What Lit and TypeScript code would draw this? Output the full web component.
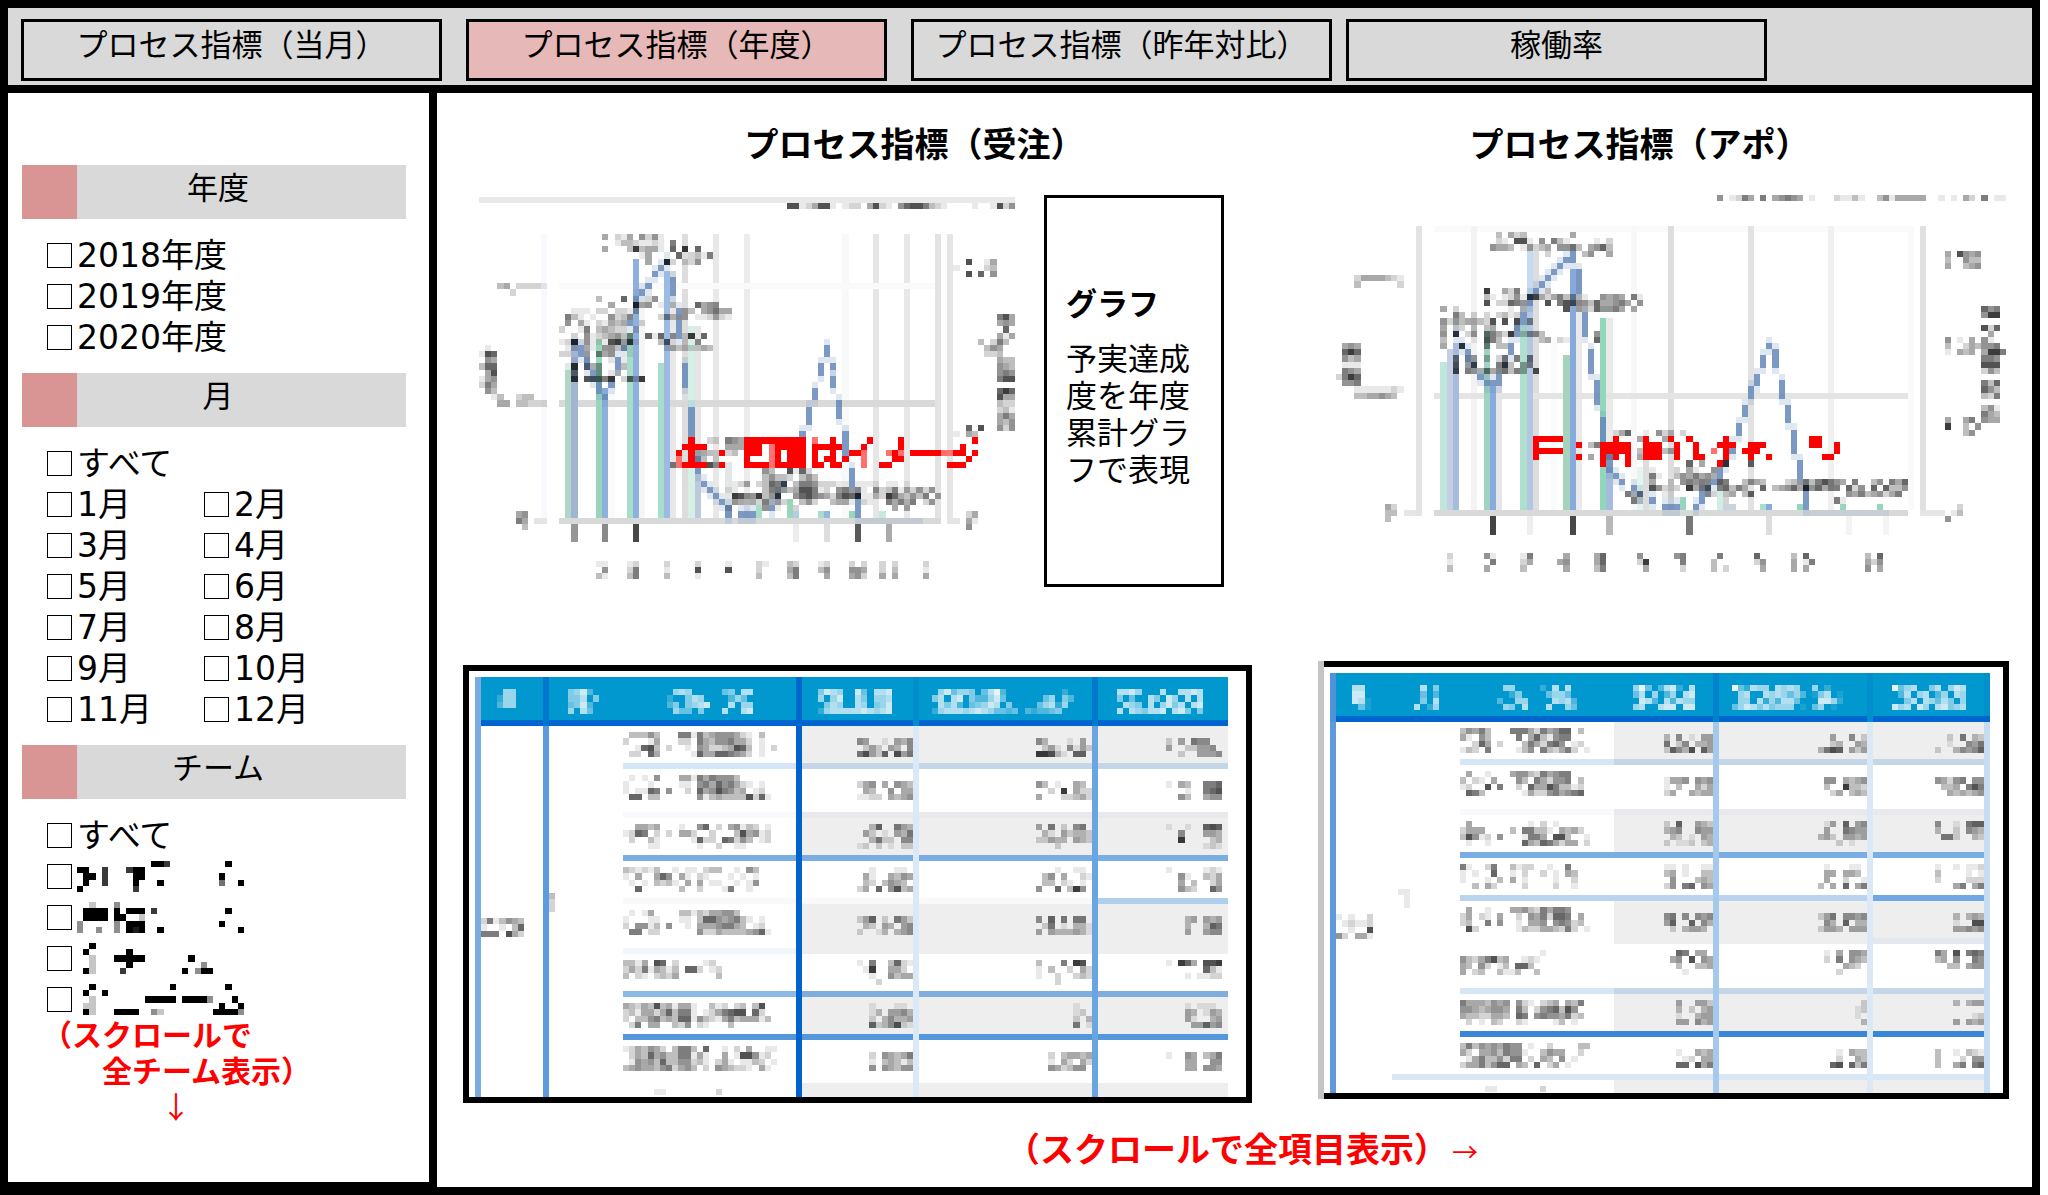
import { LitElement, html, svg, css, nothing } from "lit";
import { customElement, property } from "lit/decorators.js";

/* ---------- block glyphs: digits are ink density 1-9, R/P are red and pink ---------- */

const CELL = 37 / 6;

type Ink = (ch: string) => { fill: string; opacity: number } | null;

const greyInk: Ink = (ch) => {
  if (ch === "R") return { fill: "#ff0000", opacity: 1 };
  if (ch === "P") return { fill: "#ff7070", opacity: 1 };
  if (ch === "W") return { fill: "#ffffff", opacity: 1 };
  if (ch >= "1" && ch <= "9") return { fill: "#000000", opacity: Number(ch) * 0.085 };
  return null;
};
const blackInk: Ink = (ch) =>
  ch >= "1" && ch <= "9" ? { fill: "#000000", opacity: Number(ch) / 9 } : null;
const whiteInk: Ink = (ch) =>
  ch >= "1" && ch <= "9" ? { fill: "#ffffff", opacity: Number(ch) / 10 } : null;

const blocks = (col: number, row: number, text: string, ink: Ink) =>
  [...text].map((ch, i) => {
    const p = ink(ch);
    return p
      ? svg`<rect x=${col + i} y=${row} width="1" height="1" fill=${p.fill} fill-opacity=${p.opacity}></rect>`
      : nothing;
  });

const glyphs = (source: string, ink: Ink = greyInk) => {
  const rows = source.split("/");
  const cols = Math.max(...rows.map((r) => r.length));
  return html`<svg
    class="glyphs"
    width=${Math.round(cols * CELL)}
    height=${Math.round(rows.length * CELL)}
    viewBox="0 0 ${cols} ${rows.length}"
    preserveAspectRatio="none"
    shape-rendering="crispEdges"
    aria-hidden="true"
  >${rows.map((r, i) => blocks(0, i, r, ink))}</svg>`;
};

/* ---------- charts ---------- */

/** x, y, width, height, colour */
type Bar = [number, number, number, number, string];

interface ChartData {
  cols: number;
  rows: number;
  grid: Bar[];
  bars: Bar[];
  line: string;
  marks: string;
}

const GREEN = "#97d6bb";
const MINT = "#a8dec9";
const BLUE = "#8eb0dc";

const orders: ChartData = {
  cols: 87,
  rows: 62,
  grid: [
    [0, 0, 87, 1, "#e9e9e9"],
    [10, 6, 1, 47, "#f8f9fc"],
    [21, 23, 1, 29, "#fafafb"],
    [26, 14, 1, 38, "#f5f5f5"],
    [31, 12, 1, 40, "#e8e8e8"],
    [33, 6, 1, 46, "#dddddd"],
    [35, 21, 1, 31, "#e5e5e5"],
    [38, 6, 1, 46, "#e8e8e8"],
    [40, 43, 1, 9, "#e2e6e4"],
    [43, 6, 1, 46, "#ebecec"],
    [59, 6, 1, 46, "#f8fafa"],
    [64, 6, 1, 46, "#e6e6e6"],
    [69, 6, 1, 46, "#e8e8e8"],
    [74, 6, 1, 46, "#e3e3e3"],
    [76, 6, 1, 47, "#e5e5e5"],
    [13, 14, 61, 1, "#fafafa"],
    [13, 33, 61, 1, "#d9d9d9"],
    [9, 52, 2, 1, "#e5e5e5"],
    [76, 52, 2, 1, "#e5e5e5"],
    [15, 53, 1, 3, "#969696"],
    [20, 53, 1, 3, "#8a8a8a"],
    [25, 53, 1, 3, "#484848"],
    [51, 53, 1, 3, "#ececec"],
    [56, 53, 1, 3, "#dddddd"],
    [61, 53, 1, 3, "#5a5a5a"],
    [66, 53, 1, 3, "#aaaaaa"],
  ],
  bars: [
    [14, 28, 1, 24, "#b2d6c5"],
    [14, 27, 1, 1, "#dcece4"],
    [15, 24, 1, 28, "#a2b4d4"],
    [19, 23, 1, 29, GREEN],
    [20, 31, 1, 21, BLUE],
    [24, 22, 1, 30, MINT],
    [25, 10, 1, 42, BLUE],
    [29, 27, 1, 25, MINT],
    [30, 12, 1, 40, "#9cbbe4"],
    [34, 21, 1, 31, "#d6f0e6"],
    [35, 45, 1, 7, "#bccadc"],
    [45, 50, 1, 2, MINT],
    [50, 49, 1, 3, GREEN],
    [51, 51, 1, 1, "#b4cbe6"],
    [55, 51, 1, 1, MINT],
    [56, 51, 1, 1, "#93b6e4"],
    [60, 51, 1, 1, GREEN],
    [65, 51, 1, 1, "#c8eadc"],
    [13, 52, 62, 1, "#d8dada"],
    [62, 52, 10, 1, "#c5cad2"],
  ],
  line:
    "15,23,1 16,24,2 17,26,2 18,28,2 19,30,2 20,32,1 21,30,1 22,26,2 23,24,1 24,20,1 25,16,2 26,15,1 27,14,1 28,12,1 29,11,1 30,10,1 31,13,3 32,18,1 32,20,3 33,27,4 34,34,5 35,42,3 36,46,1 37,47,1 38,48,1 39,49,1 40,50,2 42,51,1 43,51,1 44,51,1 47,50,1 48,48,1 49,46,1 52,38,1 53,34,3 54,31,2 55,27,2 56,24,2 57,27,1 57,29,2 58,33,3 59,38,4 60,44,3 61,48,4",
  marks: `50,1:88124881.122.4821.57886321....1..1825888
20,6:4.214.5251
22,7:13321121.6
20,8:4...393441.7.9.7
26,9:14....7.2316
27,10:4..92.225
3,14:34.22221
5,15:2
19,16:3...7...25
21,17:4...945.1.3...7455
15,18:111.22.2213.......43.45644
14,19:631.1..5235....25344.112421
14,20:5.41.21434..2
13,21:2..16.34322.2
15,22:1.51234535..717.5.29.7
13,23:1291511189491...371.2.5
14,24:12.41.55321.....24332243
13,25:22..4.545..1
15,26:1.1...1.1
15,27:9.534...3
15,28:6...4.13
15,29:9.86769.2739
1,24:1
0,25:187
1,26:54
0,27:377
1,28:48
0,29:145
0,30:264
1,31:53
2,32:13..233
3,33:44.33222
6,51:45
6,52:64
7,53:3
79,10:8..14
77,11:1....23
79,12:8.7.5
79,37:7.8
77,38:1.43
79,51:24
79,52:41
79,53:5
84,19:684
84,20:454
85,21:7
84,22:414
81,23:3.263
82,24:354
82,25:223
84,26:433
84,27:543
84,28:565
84,29:688
84,31:797
84,32:844
84,33:322
84,34:231
84,35:464
84,36:435
84,37:525
37,39:22.654
40,40:4443
35,41:3432.23
35,42:23.2
31,43:6.....85
46,44:53..8172
46,45:35322.353
41,46:124.23767.366522211.1111.11.1
40,47:11....36643488612.56451.5236142525
41,48:98559358..5786542687911329742536.4
41,49:543426342..352..3441.21..64636.25
40,50:2.....5.1..2...............4.4
34,39:R
33,40:RRRR
32,41:R.R....R
32,42:P.R
32,43:PRRRR..R
43,39:RRRRRRRRRR
43,40:RRRWPRRRRR
43,41:RRRWPRWRRR
43,42:RWWWPRWRRR
43,43:RRRRPRRRRR
54,39:P..R.....R
54,40:RRRRR...R
54,41:R..R..RRP
54,42:R.RR.R..P
54,43:RR.RR...P
68,39:R
68,40:R
66,41:PRP.RRRRRPPRR
67,42:RR
65,43:RR
80,39:R
78,40:R
80,41:R
79,42:R
76,43:RRR
19,59:11...12....2....2....1....21...32...12...2.2..2.2....2
20,60:5...26....1....8....8....2....46...35...554..2.3....1
19,61:31...36....3....1.........3....36....4...452..4.4....4`,
};

const appointments: ChartData = {
  cols: 109,
  rows: 61,
  grid: [
    [16, 5, 77, 1, "#fafafa"],
    [13, 5, 1, 47, "#e3e3e3"],
    [22, 5, 1, 46, "#f3f3f3"],
    [26, 31, 1, 20, "#e6e6e6"],
    [32, 9, 1, 42, "#dddddd"],
    [35, 23, 1, 28, "#f8fafc"],
    [39, 12, 1, 39, "#eaeaea"],
    [44, 20, 1, 31, "#eaeaea"],
    [48, 5, 1, 46, "#f8f8fb"],
    [50, 43, 1, 8, "#dddddd"],
    [54, 5, 1, 46, "#dedede"],
    [67, 5, 1, 46, "#e2e2e2"],
    [80, 5, 1, 46, "#f0f0f0"],
    [93, 5, 1, 46, "#fafafa"],
    [95, 5, 1, 47, "#e0e0e0"],
    [16, 32, 77, 1, "#e4e4e4"],
    [11, 51, 2, 1, "#e6e6e6"],
    [95, 51, 4, 1, "#e6e6e6"],
    [25, 52, 1, 3, "#444444"],
    [31, 52, 1, 3, "#eeeeee"],
    [38, 52, 1, 3, "#484848"],
    [44, 52, 1, 3, "#b8b8b8"],
    [57, 52, 1, 3, "#777777"],
    [70, 52, 1, 3, "#dddddd"],
    [83, 52, 1, 3, "#f4f4f4"],
    [89, 52, 1, 3, "#f4f4f4"],
  ],
  bars: [
    [17, 27, 1, 24, "#bfe6da"],
    [18, 25, 1, 26, "#c5cfe4"],
    [19, 24, 1, 27, "#a8bbdc"],
    [24, 22, 1, 29, "#a0d3bf"],
    [25, 31, 1, 20, "#86abdc"],
    [30, 21, 1, 30, "#aedfcf"],
    [31, 9, 1, 8, "#c5daf3"],
    [31, 17, 1, 34, "#b3c7e2"],
    [37, 26, 1, 25, "#a5d3be"],
    [38, 12, 1, 39, "#86aadb"],
    [43, 20, 1, 31, "#92d6bb"],
    [44, 44, 1, 7, "#a6bcde"],
    [49, 44, 1, 7, "#e2f5ee"],
    [56, 49, 1, 2, GREEN],
    [62, 48, 1, 3, "#d0efe4"],
    [63, 50, 2, 1, "#cad2de"],
    [69, 50, 1, 1, MINT],
    [70, 50, 1, 1, "#86aadb"],
    [75, 50, 1, 1, GREEN],
    [82, 50, 1, 1, GREEN],
    [88, 50, 1, 1, GREEN],
    [16, 51, 77, 1, "#d8dada"],
    [77, 51, 13, 1, "#c9ced4"],
  ],
  line:
    "19,22,1 20,24,1 21,25,2 22,27,1 23,29,1 24,30,1 25,30,1 26,29,2 27,27,1 28,24,2 29,21,2 30,19,2 31,16,2 32,15,1 33,14,1 34,13,1 35,12,1 36,11,1 37,10,1 38,9,2 39,12,4 40,19,4 41,25,4 42,30,4 43,36,4 44,42,3 45,45,1 46,46,1 48,47,1 49,48,1 51,49,1 53,50,1 54,50,1 55,50,1 58,50,1 59,48,2 60,47,1 61,46,1 62,44,2 63,43,1 64,40,2 65,37,2 66,34,2 67,31,2 68,29,2 69,26,2 70,24,1 71,25,3 72,30,3 73,34,3 74,38,4 75,43,3 76,47,4",
  marks: `62,0:5.1264.6.45654.1...21131..35144444..1.1.42.6.11
26,6:3.423.......4
26,7:21.881.5.631....1.2
25,8:5443.15234.5563.4573
34,9:2.....35..4
3,13:24444321
3,14:3......2
24,15:9..426....3
24,16:31.12518842463421..5454.61
24,17:8.22765...8.687553744564.5
17,18:4.2........1.3......8.43275564.4
19,19:63.2.2.2312
17,20:525344328.8.8.5
17,21:4.22.3.34...1
17,22:5.8.25.66429.3553........5
17,23:3....1.763......34.21....7
17,24:4..8...5.33
19,26:6.24.3.26.6.6
19,27:7.47...683.45
19,28:8.6436456364.8
1,24:454
1,25:797
1,26:534
1,27:111
1,28:654
0,29:2697
1,30:556
3,31:11111121
3,32:3344543
8,50:42
8,51:33
8,52:3
99,9:4.8545
99,10:3..533
99,11:4..345
99,23:5.1.4.51
99,24:3..243556
99,25:1.434.4996
99,36:4..46
99,37:9..3.5
102,38:35
101,50:2
100,51:13
99,52:5
105,18:756
105,19:599
105,21:827
106,22:4
105,26:665
105,27:888
105,28:253
105,30:637
105,31:753
105,32:326
105,34:351
105,35:643
105,36:544
45,38:247..1.523.2
49,39:4...43
41,40:36
49,41:3.1.34
41,42:4..2....4
57,43:7.4...8...7
51,44:1...2.41..5
51,45:61..3546453
51,46:4..2.56565.76..3543...2346368654.6..35.647
51,47:85222.9466.67364..7.34574957466.725.7.7335
47,48:634...11.....52.34.37...............546345246
48,49:62.............2.................61
32,39:RRRRR........R....R...R..R.....R.............RR
32,40:R......R...RRRRR..RRR..R..R...RRR..RRR.......RR..R
32,41:RRRRR......RRRRR..RRR..R..R..P.R..RRR............R
32,42:R......R...R.R.R..RRR..R..RR...R...R..R........RR
43,43:R...R..............R
18,58:2.....51....16.....4....47.....5.....56.....6.....7.....3.7.........3.7
18,59:1......6....24....45....47.....29.....6....3......25....4.16........425
18,60:3.....4.....3......4....36......4.....2....3.2.....4....4.4.........5.4`,
};

@customElement("block-chart")
export class BlockChart extends LitElement {
  @property({ attribute: false }) data!: ChartData;

  static styles = css`
    :host {
      display: block;
    }
    .plot {
      display: block;
      width: 100%;
      height: 100%;
    }
  `;

  private box([x, y, w, h, fill]: Bar) {
    return svg`<rect x=${x} y=${y} width=${w} height=${h} fill=${fill}></rect>`;
  }

  render() {
    const d = this.data;
    const line = d.line.split(" ").map((p) => {
      const [x, y, h] = p.split(",").map(Number);
      return svg`
        <rect x=${x} y=${y - 1} width="1" height=${h + 2} fill="#6f92bf" fill-opacity="0.22"></rect>
        <rect x=${x} y=${y} width="1" height=${h} fill="#6386b8" fill-opacity="0.8"></rect>`;
    });
    const marks = d.marks.split("\n").map((m) => {
      const [pos, text] = m.split(":");
      const [x, y] = pos.split(",").map(Number);
      return blocks(x, y, text, greyInk);
    });
    return html`<svg
      class="plot"
      viewBox="0 0 ${d.cols} ${d.rows}"
      preserveAspectRatio="none"
      shape-rendering="crispEdges"
      aria-hidden="true"
    >${d.grid.map((b) => this.box(b))}${d.bars.map((b) => this.box(b))}${line}${marks}</svg>`;
  }
}

/* ---------- tables ---------- */

interface RowData {
  height: number;
  label: string;
  values: [string, string, string];
  /** rule colours: label cell, value cells, last value cell */
  rules: [string, string, string];
}

interface TableData {
  widths: number[];
  /** vertical rule colours in the header and in the body, one per column */
  headRules: string[];
  bodyRules: string[];
  /** closing rule at the right edge: header, body */
  endRules: [string, string];
  heads: string[];
  year: string;
  month: string;
  groupRule: string;
  rows: RowData[];
}

const NONE = "transparent";

const ordersTable: TableData = {
  widths: [68, 80, 173, 117, 179, 136],
  headRules: ["#7aabe2", "#0077cf", NONE, "#0066cf", "#008dcc", "#0078cc"],
  bodyRules: ["#7aabe2", "#5c9cde", NONE, "#0063cb", "#dbe8f5", "#6aa5e1"],
  endRules: [NONE, NONE],
  heads: [
    ".66./266./366./....",
    "5683./557.5/4583./6.74.",
    ".676.....45.77/2..576....364./35.5678...7.66/.644.5...7..78",
    "5876..84.778/6.68..75.667/.576..76.568/267777787678",
    ".684665.4793.........2/57.78.533684......46.53/.7573.45687.5....46726./26777678764434.323345",
    "7786...7..7787/5.4..75.86.7.7/.765.7.6857.78/7.765778.785.5",
  ],
  year: "2613543/1..1.37/666.842",
  month: "3/2/2",
  groupRule: NONE,
  rows: [
    {
      height: 43,
      label:
        ".33353...661634555421.3./2...14...22.643556442.1./..1783.2..1.542234873.1.2/.22.74.....1744776542.1.",
      values: ["........./54..1.435/.242.43.5/68427.846", "........./53...1.4./.241.5142/99831.77.", "........./2.4.655./4..22445./..2..4445"],
      rules: ["#d5e6f6", "#c5d6e9", "#c5d6e9"],
    },
    {
      height: 49,
      label:
        ".1.1.5...4416465553...../1...1....11.564756421.1./1.1176.5..2.74586534.12./.77.33......513433338271",
      values: ["........./245.4.543/.43..5.44/1122.4345", "........./53.1..43./..2.9.422/4...22342", "........./1.43..667/...1..678/..53..455"],
      rules: ["#f8f9fc", "#e7e9ec", "#e7e9ec"],
    },
    {
      height: 43,
      label:
        "..4434...1..57.2.45132.1/1276.2.2.442..2...384512/.2..31.....1722.76253.12/....11......1..2..11....",
      values: ["..37..643/.42.1.436/..3622.55/12.2.1.22", "4.6.2.56./.31.42332/22433.432/...2.....", "1..1..787/..5...443/..9....23/......121"],
      rules: ["#7aade3", "#7aade3", "#7aade3"],
    },
    {
      height: 43,
      label:
        "321213..1.11.233..1.53../1.4..475.41.21...1.1.1../.1.1.3231.4.4.11..1.15./..7......3..2...16..1...",
      values: ["..1...11./.41..4354/.32.3543./24.7.5834", "...1..11./.35.4..21/.33.21.1./5..7.395.", "1.....121/..51..324/..4.3..24/..532..75"],
      rules: ["#f8f9fb", "#f8f9fb", "#b0cfee"],
    },
    {
      height: 50,
      label:
        ".1.14....3313244553...../1...11...11.377545631.1./2.5513.5..1.44456643.12./.66.22......522433334571",
      values: ["........./247.2.642/.32.43.45/2..13.345", "........./5.7.6.66./.26.1.331/4.4333431", "........./...34.434/...3..376/...4..455"],
      rules: ["#f0f6fb", "#eeeeee", "#eeeeee"],
    },
    {
      height: 43,
      label: "3314.87.2....12.../242614313.772.12../3.21.2324......3..",
      values: ["1.6..3721/.19..442./..1..5344/...2.....", "3...6.98./1.3..2.42/1..2..232/...2.....", "1.974.889/......731/...1.1122/........."],
      rules: ["#8bb9e8", "#7fadde", "#7fadde"],
    },
    {
      height: 43,
      label:
        "432438341441..312.23.38../231442473661.1246788.72./2.3356343771532146344413./.26.44..325.21...3......",
      values: ["..1...11./..13.4453/..2.35334/..7235821", "......1../......12./......2.3/......6.1", "...1.111./...43.143/...41..34/....44745"],
      rules: ["#5597dc", "#5597dc", "#5597dc"],
    },
    {
      height: 43,
      label:
        "1243542.3663.7..1.2.4..11/.2437453366141..4.188512./.1545373355231.241.1132.1/345443562453.2.543221.41.",
      values: ["........./..2.54346/..1.34313/..5.54355", "........./..2.34434/..1.42.42/..542355.", "........./1..54.346/...44..55/...44.554"],
      rules: [NONE, NONE, NONE],
    },
    { height: 14, label: ".....11........2..", values: ["", "", ""], rules: [NONE, NONE, NONE] },
  ],
};

const appointmentsTable: TableData = {
  widths: [62, 68, 154, 99, 154, 123],
  headRules: ["#5093d8", NONE, NONE, NONE, "#0083cc", "#008ecc"],
  bodyRules: ["#5c9cde", NONE, NONE, NONE, "#a5c9ed", "#dbe8f5"],
  endRules: ["#0090cc", "#c6dcf3"],
  heads: [
    "77./88./871/.41",
    ".7.5/.4.3/.5.7/7.26",
    ".66....2.7.7./..25....4664./3..66....7673/.65.7...7..64",
    "694.3782.7/47.6.36.78/.873.73766/67..788.88",
    "942766.7676..6.2../.67..7676463.157.1./.66.7263774...8862/4687575666.1.46.1.",
    "9467..57.687/.37.67.36.76/..57.76475.6/867.86.78567",
  ],
  year: "1.1..2/.12112/..1..8/52.441",
  month: "11/.1/.1",
  groupRule: "#d9e6f5",
  rows: [
    {
      height: 43,
      label: "35463...6664264577.3./41.53....6.4731566.../..274.2...3642675.12./132.6....135.632462.1",
      values: ["......../3.5.1.44/6.25.334/27538.74", "......../..4..5.2/..23..43/3687.424", "......../..2.6.32/..1..546/2..35457"],
      rules: ["#d5e6f6", "#c5d6e9", "#c5d6e9"],
    },
    {
      height: 50,
      label: ".4..1...4553264566.../3.21.4...53.642556.3./12..8.6..2.744863312./.763......1422564567.",
      values: ["......../1445.545/1.3..424/24..4344", "......../.55.4345/.3..9332/..24.343", "......../54256.55/.334.686/..434345"],
      rules: ["#f8f9fc", "#e7e9ec", "#e7e9ec"],
    },
    {
      height: 43,
      label: ".4.........1.2.1...../2444....3.66331.4342./38512.5...1664.883..1/.1..1.....743764244.2",
      values: ["2.7..432/345..544/.32.1.43/2.112.23", ".14.7.45/.4..6544/342.4434/...2.1..", "5..1.677/3..2.543/.662..32/........"],
      rules: ["#7aade3", "#7aade3", "#7aade3"],
    },
    {
      height: 43,
      label: "61..26..3122..1..6.../1.1..7..1.2..2.1.43../1...1.3.4.1....1..2../..3.42....2....2..1..",
      values: ["11.1..11/34.1..33/.5...343/25.67.54", ".1...11./.44.443./.4..2..1/3.4.7.46", "1..1.112/3....1.1/2....222/...46.46"],
      rules: ["#bad4f0", "#bad4f0", "#6fa8e4"],
    },
    {
      height: 43,
      label: ".4..1...4453264665.../24.21.4..2.5462776.4./23..6.5..1.445.56523./.82......1322443262.1",
      values: ["......../56.5.545/47..7.53/.2.3443", "......../246.5545/.53.7.33/2443.444", "......../...3.343/...1..88/...44545"],
      rules: [NONE, NONE, "#e4e7ed"],
    },
    {
      height: 50,
      label: ".............1/53246834..121/43.52.13.773./4.23..3113..3",
      values: ["..76.44./.45.8.54/..3..334/...1....", ".1.4.554/.2.6.543/....432./...2....", "64.8.676/34.5..65/..33.455/........"],
      rules: ["#d6e6f5", "#c5d6e9", "#c5d6e9"],
    },
    {
      height: 43,
      label: "64443545.521.234.436./55434554.63.2567385../43322443.76.56554623./.2.1.32..21....13.1..",
      values: ["..4..442/..3.2.34/..1..344/..44.534", ".......2/......12/......1./.......3", "...3.344/......../......12/...4.434"],
      rules: ["#3a86d8", "#3a86d8", "#3a86d8"],
    },
    {
      height: 43,
      label: "3635454655.1..2....33/42.44536551..3544..2./.146335266.2.43.5.1../24463577.43.7.24.1...",
      values: ["......../..1..434/...12.44/..77.846", "......../...1.433/...2..43/..78.736", "......../3..1.321/3...2.55/3..46.67"],
      rules: ["#d9e6f5", "#d9e6f5", "#d9e6f5"],
    },
    { height: 13, label: "....11.......2", values: ["", "", ""], rules: [NONE, NONE, NONE] },
  ],
};

@customElement("block-table")
export class BlockTable extends LitElement {
  @property({ attribute: false }) data!: TableData;

  static styles = css`
    :host {
      display: block;
    }
    .table {
      width: 100%;
      table-layout: fixed;
      border-collapse: separate;
      border-spacing: 0;
      line-height: 0;
    }
    .glyphs {
      display: inline-block;
      vertical-align: top;
    }
    .head,
    .cell {
      box-sizing: border-box;
      vertical-align: top;
      overflow: hidden;
      box-shadow:
        inset 6px 0 0 var(--v),
        inset 0 -6px 0 var(--h);
    }
    .head {
      height: 49px;
      padding: 12px 0 0;
      text-align: center;
      background: #0098cf;
      --h: #0066cf;
    }
    .head:last-child {
      box-shadow:
        inset 6px 0 0 var(--v),
        inset 0 -6px 0 var(--h),
        inset -6px 0 0 var(--e);
    }
    .cell {
      padding: 6px 0 0;
      text-align: left;
      font-weight: normal;
    }
    .year {
      padding: 192px 0 0 6px;
    }
    .month {
      padding: 167px 0 0 6px;
    }
    .value {
      text-align: right;
    }
    .shade {
      background: #eeeeee;
    }
    .last {
      padding-right: 6px;
      box-shadow:
        inset 6px 0 0 var(--v),
        inset -6px 0 0 var(--e),
        inset 0 -6px 0 var(--h);
    }
  `;

  render() {
    const d = this.data;
    return html`<table class="table" style="--e:${d.endRules[1]}">
      <colgroup>
        ${d.widths.map((w) => html`<col style="width:${w}px" />`)}
      </colgroup>
      <thead>
        <tr>
          ${d.heads.map((h, i) => html`<th class="head" scope="col" style="--v:${d.headRules[i]};--e:${d.endRules[0]}">${glyphs(h, whiteInk)}</th>`)}
        </tr>
      </thead>
      <tbody>
        ${d.rows.map(
          (r, i) => html`<tr style="height:${r.height}px">
            ${i === 0
              ? html`<td class="cell year" rowspan=${d.rows.length} style="--v:${d.bodyRules[0]};--h:transparent">${glyphs(d.year)}</td>
                  <td class="cell month" rowspan=${d.rows.length - 1} style="--v:${d.bodyRules[1]};--h:${d.groupRule}">${glyphs(d.month)}</td>`
              : nothing}
            ${i === d.rows.length - 1
              ? html`<td class="cell" style="--v:${d.bodyRules[1]};--h:transparent"></td>`
              : nothing}
            <th class="cell" scope="row" style="--v:transparent;--h:${r.rules[0]}">${glyphs(r.label)}</th>
            ${r.values.map(
              (v, k) => html`<td
                class="cell value ${i % 2 === 0 ? "shade" : ""} ${k === 2 ? "last" : ""}"
                style="--v:${d.bodyRules[k + 3]};--h:${r.rules[k === 2 ? 2 : 1]}"
              >${v ? glyphs(v) : nothing}</td>`
            )}
          </tr>`
        )}
      </tbody>
    </table>`;
  }
}

/* ---------- page ---------- */

const TABS = ["プロセス指標（当月）", "プロセス指標（年度）", "プロセス指標（昨年対比）", "稼働率"];
const YEARS = ["2018年度", "2019年度", "2020年度"];
const MONTHS = Array.from({ length: 12 }, (_, i) => `${i + 1}月`);
const TEAMS = [
  "............997.........9../99..7...799................/.99.7....99............9.../.9..7....9...9.........5..9/9........7.................",
  "..2...4..................../.9999.9.999.7...........9../.9999.99..2................/4.....4.999............9.../4..4..4.989..9............9",
  "..9......................../.9......9................../..2...99999.......9......../..2.....9...........4....../.92....7.........9.499.....",
  "..9............9........9../.9..9....................../..2........99999.99994...9./.22....................9..9/.92...9999..42........99994",
];

@customElement("app-root")
export class AppRoot extends LitElement {
  @property({ type: Number }) active = 1;

  static styles = css`
    :host {
      display: block;
      font-family: "DejaVu Sans", "Noto Sans CJK JP", sans-serif;
      font-size: 31px;
      line-height: 37px;
      color: #000;
      background: #fff;
    }
    .page {
      box-sizing: border-box;
      min-height: 100vh;
      margin-right: 8px;
      border: 8px solid #000;
      display: flex;
      flex-direction: column;
      background: #fff;
    }
    .tabs {
      display: grid;
      grid-template-columns: repeat(4, 421fr) 231fr;
      gap: 24px;
      padding: 11px 0 4px 13px;
      background: #d9d9d9;
      border-bottom: 8px solid #000;
      font-family: "Noto Sans CJK JP", sans-serif;
    }
    .tab {
      box-sizing: border-box;
      height: 62px;
      padding: 0 0 16px;
      border: 3px solid #000;
      background: #d9d9d9;
      color: #000;
      font: inherit;
      white-space: nowrap;
    }
    .tab.on {
      background: #e6b8b7;
    }
    .tab:last-child {
      margin-left: -10px;
      margin-right: 10px;
    }
    .body {
      flex: 1;
      display: flex;
    }
    .side {
      flex: none;
      box-sizing: border-box;
      width: 429px;
      padding: 72px 23px 0 14px;
      border-right: 8px solid #000;
      border-bottom: 5px solid #000;
    }
    .group {
      margin: 0;
      padding: 0;
      border: 0;
    }
    .bar {
      box-sizing: border-box;
      width: 100%;
      height: 54px;
      padding: 0 0 14px 8px;
      display: flex;
      align-items: center;
      justify-content: center;
      background: linear-gradient(to right, #d99594 55px, #d9d9d9 55px);
      font-family: "Noto Sans CJK JP", sans-serif;
    }
    .options {
      display: grid;
      grid-template-columns: 157px 1fr;
      padding: 16px 0 15px 25px;
      font-size: 33px;
      line-height: 41px;
    }
    .option {
      display: flex;
      align-items: center;
      gap: 5px;
      height: 41px;
      white-space: nowrap;
    }
    .option.wide {
      grid-column: 1 / -1;
    }
    .box {
      appearance: none;
      flex: none;
      box-sizing: border-box;
      width: 25px;
      height: 25px;
      margin: 0;
      border: 1px solid #000;
      background: #fff;
    }
    .box:checked {
      background: #d99594;
    }
    .more {
      margin: 0;
      color: #ff0000;
      font-family: "Noto Sans CJK JP", sans-serif;
      font-weight: bold;
    }
    .side .more {
      margin-top: -20px;
      padding-left: 20px;
      font-size: 30px;
      line-height: 36px;
    }
    .line {
      display: block;
      white-space: nowrap;
    }
    .line.in {
      padding-left: 60px;
    }
    .arrow {
      font-weight: normal;
    }
    .line.down {
      padding-left: 119px;
    }
    .main {
      flex: 1;
      min-width: 0;
      padding: 30px 23px 0 26px;
    }
    .panels {
      display: grid;
      grid-template-columns: 790fr 690fr;
      column-gap: 66px;
      align-items: start;
    }
    .title {
      margin: 0;
      font-family: "Noto Sans CJK JP", sans-serif;
      font-size: 34px;
      line-height: 40px;
      text-align: center;
    }
    .first .title {
      padding: 0 0 0 114px;
    }
    .second .title {
      padding: 0 48px 0 0;
    }
    .figure {
      display: flex;
      align-items: flex-start;
      gap: 29px;
      margin: 0;
    }
    .first .figure {
      padding: 32px 28px 78px 16px;
    }
    .second .figure {
      padding: 32px 3px 89px 18px;
    }
    .chart {
      flex: 1;
      min-width: 0;
    }
    .first .chart {
      margin-top: 2px;
      aspect-ratio: 537 / 383;
    }
    .second .chart {
      aspect-ratio: 669 / 376;
    }
    .note {
      flex: none;
      box-sizing: border-box;
      width: 180px;
      height: 392px;
      padding: 0 19px 14px;
      border: 3px solid #000;
      display: flex;
      flex-direction: column;
      justify-content: center;
      gap: 18px;
      font-family: "Noto Sans CJK JP", sans-serif;
    }
    .note-title,
    .note-text {
      margin: 0;
      font-size: 31px;
      line-height: 37px;
    }
    .frame {
      border: 6px solid #000;
      padding: 6px 18px 0 6px;
    }
    .edge {
      border-left: 6px solid #c5c5c5;
    }
    .edge .frame {
      border-left: 0;
      padding-right: 13px;
    }
    .main .more {
      padding: 25px 0 14px 543px;
      font-size: 34px;
      line-height: 40px;
    }
    .main .arrow {
      padding-left: 4px;
      font-size: 26px;
    }
    .glyphs {
      display: block;
    }
  `;

  private option(label: unknown, name: string, wide = false) {
    return html`<label class="option ${wide ? "wide" : ""}"><input class="box" type="checkbox" name=${name} />${label}</label>`;
  }

  render() {
    return html`<div class="page">
      <nav class="tabs">
        ${TABS.map(
          (t, i) => html`<button
            type="button"
            class="tab ${i === this.active ? "on" : ""}"
            @click=${() => (this.active = i)}
          >${t}</button>`
        )}
      </nav>
      <div class="body">
        <aside class="side">
          <fieldset class="group">
            <legend class="bar">年度</legend>
            <div class="options">${YEARS.map((y) => this.option(y, "year", true))}</div>
          </fieldset>
          <fieldset class="group">
            <legend class="bar">月</legend>
            <div class="options">
              ${this.option("すべて", "month", true)} ${MONTHS.map((m) => this.option(m, "month"))}
            </div>
          </fieldset>
          <fieldset class="group">
            <legend class="bar">チーム</legend>
            <div class="options">
              ${this.option("すべて", "team", true)}
              ${TEAMS.map((t) => this.option(glyphs(t, blackInk), "team", true))}
            </div>
          </fieldset>
          <p class="more">
            <span class="line">（スクロールで</span>
            <span class="line in">全チーム表示）</span>
            <span class="line down arrow">↓</span>
          </p>
        </aside>
        <main class="main">
          <div class="panels">
            <section class="first">
              <h2 class="title">プロセス指標（受注）</h2>
              <div class="figure">
                <block-chart class="chart" .data=${orders}></block-chart>
                <div class="note">
                  <h3 class="note-title">グラフ</h3>
                  <p class="note-text">予実達成度を年度累計グラフで表現</p>
                </div>
              </div>
              <div class="frame"><block-table .data=${ordersTable}></block-table></div>
            </section>
            <section class="second">
              <h2 class="title">プロセス指標（アポ）</h2>
              <div class="figure">
                <block-chart class="chart" .data=${appointments}></block-chart>
              </div>
              <div class="edge">
                <div class="frame"><block-table .data=${appointmentsTable}></block-table></div>
              </div>
            </section>
          </div>
          <p class="more">（スクロールで全項目表示）<span class="arrow">→</span></p>
        </main>
      </div>
    </div>`;
  }
}
